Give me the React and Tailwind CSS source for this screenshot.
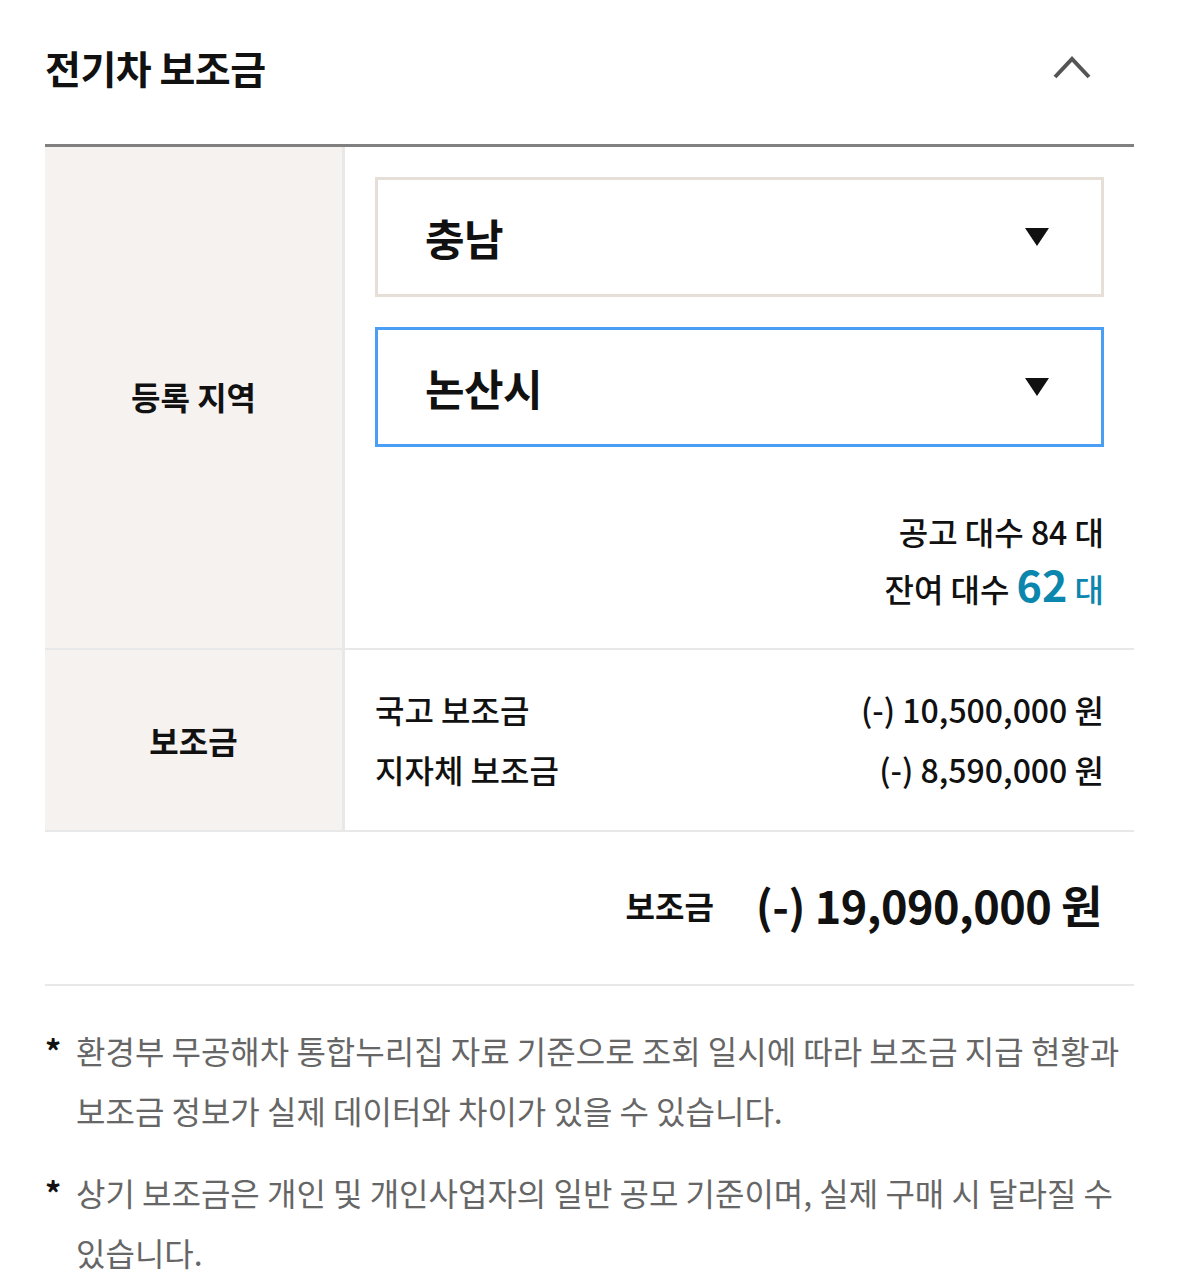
import { useState } from 'react'

const FONT = "font-['Noto_Sans_CJK_KR','Noto_Sans',sans-serif]"

function Caret() {
    return (
        <svg width="24" height="18" viewBox="0 0 24 18" className="shrink-0">
            <polygon points="0,0 24,0 12,18" fill="#111" />
        </svg>
    )
}

function SelectBox({ value, active }) {
    return (
        <div
            className={`flex h-[120px] items-center justify-between border-[3px] pl-[47px] pr-[52px] ${active ? 'border-[#4a9ff5]' : 'border-[#e6dfd8]'}`}
        >
            <span className="text-[43px] font-bold leading-none tracking-[-0.5px] text-[#111]">{value}</span>
            <Caret />
        </div>
    )
}

export default function App() {
    const [open] = useState(true)

    return (
        <div className={`${FONT} min-h-[1288px] bg-white px-[45px] text-[#111]`}>
            {/* Header */}
            <header className="flex h-[144px] items-center justify-between pb-[10px]">
                <h2 className="text-[39px] font-bold tracking-[-0.5px]">전기차 보조금</h2>
                <svg width="40" height="26" viewBox="0 0 40 26" className="mr-[42px]">
                    <polyline points="3,23 20,5 37,23" fill="none" stroke="#555" strokeWidth="4" />
                </svg>
            </header>

            {open && (
                <div className="border-t-[3px] border-[#808080] break-keep">
                    {/* 등록 지역 */}
                    <div className="grid grid-cols-[300px_1fr] border-b-2 border-[#e8e8e8]">
                        <div className="flex items-center justify-center border-r-[3px] border-[#e8e8e8] bg-[#f5f2f0] pb-[4px]">
                            <span className="text-[32px] font-bold">등록 지역</span>
                        </div>
                        <div className="flex flex-col px-[30px] pt-[30px] pb-[39px]">
                            <SelectBox value="충남" />
                            <div className="mt-[30px]">
                                <SelectBox value="논산시" active />
                            </div>
                            <div className="mt-[58px] flex flex-col items-end text-[32px] font-medium">
                                <div className="h-[52px] leading-[52px]">공고 대수 84 대</div>
                                <div className="flex h-[52px] items-baseline leading-[52px]">
                                    <span>잔여 대수&nbsp;</span>
                                    <span className="text-[43px] font-bold leading-[52px] text-[#0b86ad]">62</span>
                                    <span className="text-[#0b86ad]">&nbsp;대</span>
                                </div>
                            </div>
                        </div>
                    </div>

                    {/* 보조금 */}
                    <div className="grid h-[182px] grid-cols-[300px_1fr] border-b-2 border-[#e8e8e8]">
                        <div className="flex items-center justify-center border-r-[3px] border-[#e8e8e8] bg-[#f5f2f0]">
                            <span className="text-[32px] font-bold">보조금</span>
                        </div>
                        <div className="flex flex-col justify-center px-[30px] pb-[2px] text-[32px] font-medium leading-[60px]">
                            <div className="flex justify-between">
                                <span>국고 보조금</span>
                                <span>(-) 10,500,000 원</span>
                            </div>
                            <div className="flex justify-between">
                                <span>지자체 보조금</span>
                                <span>(-) 8,590,000 원</span>
                            </div>
                        </div>
                    </div>

                    {/* Total */}
                    <div className="flex h-[154px] items-center justify-end gap-[42px] border-b-2 border-[#e8e8e8] pr-[32px] pb-[6px]">
                        <span className="text-[32px] font-bold">보조금</span>
                        <span className="text-[45px] font-bold tracking-[-0.5px]">(-) 19,090,000 원</span>
                    </div>

                    {/* Notes */}
                    <div className="flex flex-col gap-[22px] pt-[34px] text-[32px] leading-[60px] text-[#666]">
                        <div className="flex">
                            <span className="w-[31px] shrink-0 font-bold text-[#111]">*</span>
                            <p>환경부 무공해차 통합누리집 자료 기준으로 조회 일시에 따라 보조금 지급 현황과 보조금 정보가 실제 데이터와 차이가 있을 수 있습니다.</p>
                        </div>
                        <div className="flex">
                            <span className="w-[31px] shrink-0 font-bold text-[#111]">*</span>
                            <p>상기 보조금은 개인 및 개인사업자의 일반 공모 기준이며, 실제 구매 시 달라질 수 있습니다.</p>
                        </div>
                    </div>
                </div>
            )}
        </div>
    )
}
